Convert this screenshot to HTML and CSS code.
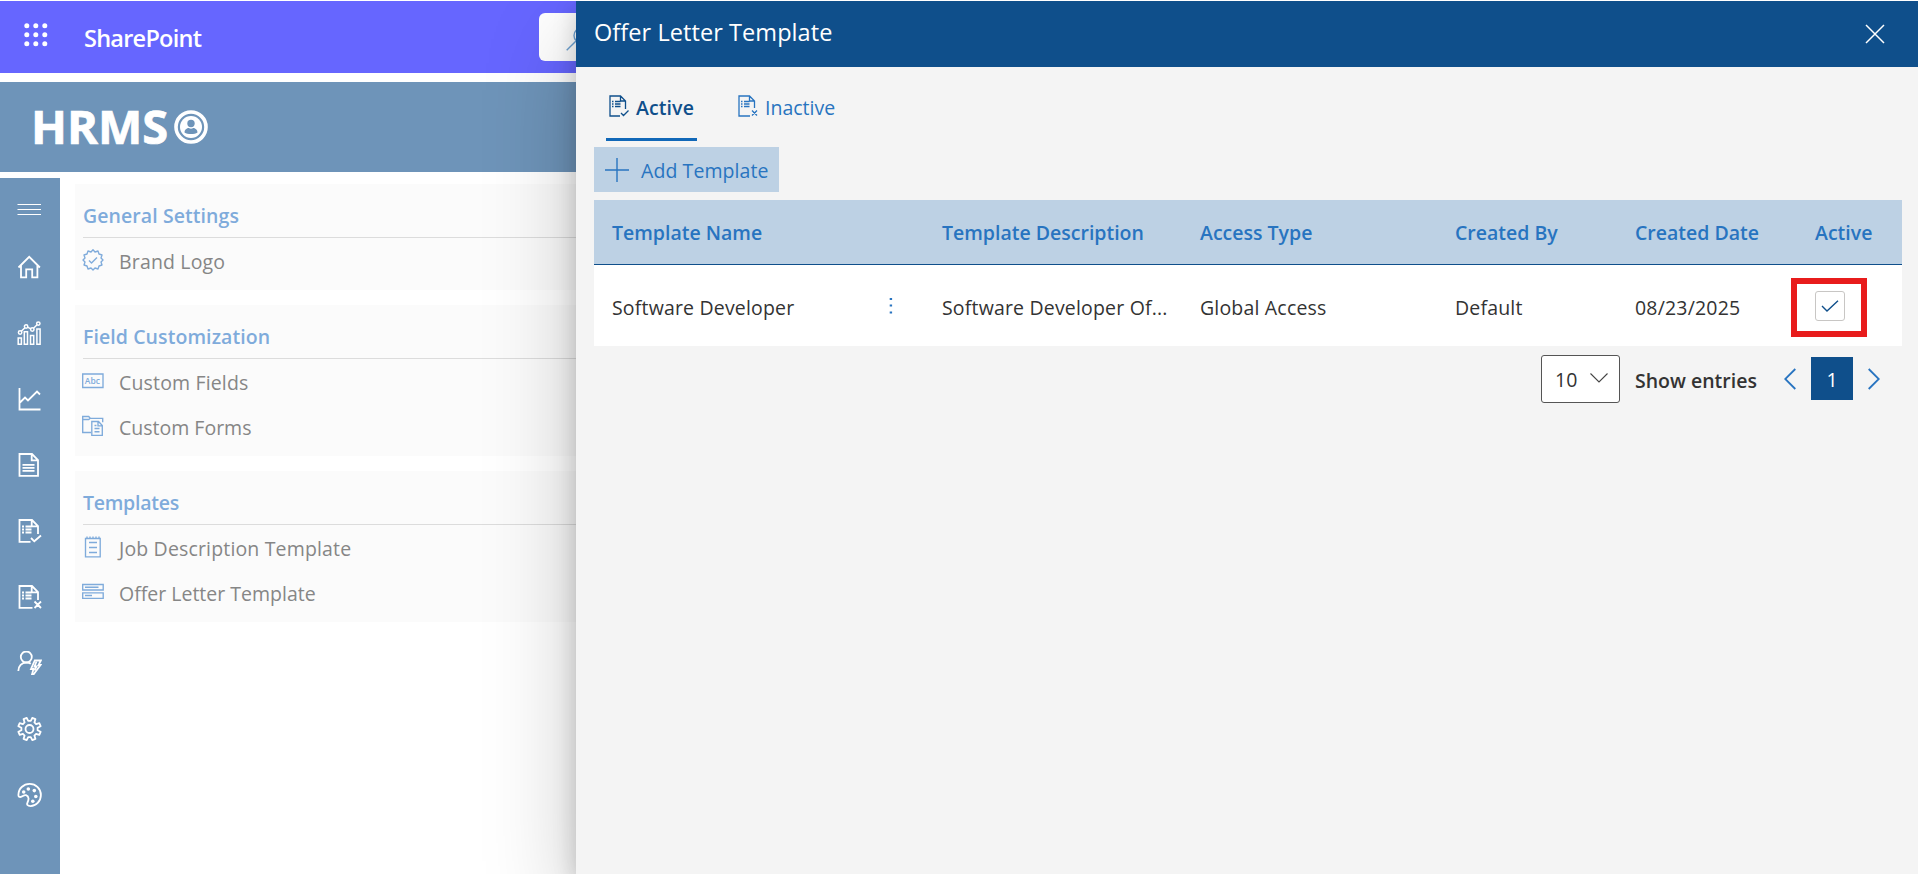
FILE: index.html
```html
<!DOCTYPE html>
<html lang="en">
<head>
<meta charset="utf-8">
<title>Offer Letter Template</title>
<link rel="stylesheet" href="styles.css">
</head>
<body>
<div class="page">
  <header class="suite-bar">
    <svg class="waffle" viewBox="0 0 24 24"><g fill="#fff"><circle cx="2.8" cy="2.8" r="2.5"/><circle cx="11.8" cy="2.8" r="2.5"/><circle cx="20.8" cy="2.8" r="2.5"/><circle cx="2.8" cy="11.8" r="2.5"/><circle cx="11.8" cy="11.8" r="2.5"/><circle cx="20.8" cy="11.8" r="2.5"/><circle cx="2.8" cy="20.8" r="2.5"/><circle cx="11.8" cy="20.8" r="2.5"/><circle cx="20.8" cy="20.8" r="2.5"/></g></svg>
    <span class="suite-name">SharePoint</span>
    <div class="search"><svg viewBox="0 0 24 24" width="24" height="24"><circle cx="15.5" cy="8.500" r="7.5"/><path d="M10 14L.7 23.300"/></svg></div>
  </header>
  <div class="brand-bar">
    <span class="brand-name">HRMS</span>
    <svg class="brand-icon" viewBox="0 0 34 34"><circle cx="17" cy="17" r="15" fill="none" stroke="#fff" stroke-width="3.600"/><circle cx="17" cy="17" r="11" fill="#fff"/><circle cx="17" cy="13.500" r="3.700" fill="#6e94b9"/><path d="M10.500 22.500c0-3 2.500-4.500 4.300-4.500 1.400.9 3 .9 4.400 0 1.800 0 4.300 1.500 4.300 4.500-3 2-10 2-13 0z" fill="#6e94b9"/></svg>
  </div>
  <div class="main">
    <nav class="rail">
      <svg class="thin" viewBox="0 0 24 24"><path d="M0 6.500h23.500M0 11.500h23.500M0 16.500h23.500"/></svg>
      <svg viewBox="0 0 24 24"><path d="M1 12.500L11.700 1.800 22.400 12.500M3.500 10.500v11.800h5.200v-8h6v8h5.200V10.500"/></svg>
      <svg viewBox="0 0 24 24"><g stroke-width="1.500"><path d="M.7 17h3.200v6.300H.7zM6.800 10.700H10v12.600H6.800zM13 14.500h3.200v8.800H13zM19.400 8h3.200v15.300h-3.200z"/><circle cx="2.600" cy="11.500" r="1.700"/><circle cx="8.600" cy="5.500" r="1.700"/><circle cx="14.800" cy="8.500" r="1.700"/><circle cx="20.800" cy="2.600" r="1.700"/><path d="M3.800 10.300l3.600-3.600M10.100 6.200l3.200 1.600M16 7.300l3.600-3.500"/></g></svg>
      <svg viewBox="0 0 24 24"><path d="M2 1v21.500h21M2.500 15.500l5-5 3 3 9-9 3 3"/></svg>
      <svg viewBox="0 0 24 24"><path d="M2 1h12.500l6 6v15.800H2zM14.200 1.300v6h6M5 11.800h12M5 14.800h12M5 17.800h12"/></svg>
      <svg viewBox="0 0 24 24"><path d="M13 22.800H2V1h12.500l6 6v8M14.200 1.300v6h6M4.500 7.500h2M8 7.500h6M4.500 10.500h2M8 10.500h6M4.500 13.500h2M8 13.500h6M13.500 19l3.300 3.300L23.500 16.500"/></svg>
      <svg viewBox="0 0 24 24"><path d="M15 22.800H2V1h12.500l6 6v8M14.200 1.300v6h6M4.500 7.500h2M8 7.500h6M4.500 10.500h2M8 10.500h6M4.500 13.500h2M8 13.500h6M17 16.500l6.500 6.500M23.500 16.500L17 23"/></svg>
      <svg viewBox="0 0 24 24"><circle cx="8.800" cy="6" r="5.500"/><path d="M.8 20c0-5 3.500-8.500 8-8.500 2 0 3.500.5 4.500 1.200M17.300 9.500h6l-2.300 4.500h2l-7 9.500h-1.500l1.500-5.500h-2.500z"/><path d="M19 10.500l-2 5h2l-2 4"/></svg>
      <svg viewBox="0 0 24 24"><g stroke-linejoin="round"><circle cx="12" cy="12" r="4"/><path d="M9.200.9l1.500 3h2.600l1.500-3 3.100 1.300-1 3.200 1.700 1.700 3.200-1 1.300 3.100-3 1.500v2.600l3 1.500-1.300 3.100-3.200-1-1.700 1.700 1 3.200-3.100 1.300-1.500-3h-2.600l-1.500 3-3.100-1.300 1-3.200-1.700-1.700-3.200 1L.9 14.800l3-1.500v-2.600l-3-1.500 1.300-3.100 3.200 1 1.700-1.700-1-3.200z"/></g></svg>
      <svg viewBox="0 0 24 24"><path d="M.9 12C.9 5.500 6 .9 12.200.9S23.400 5.800 23.400 12c0 6.300-5 11.100-10.400 11.100-3 0-4-1.600-3-3.600 1.200-2.600 2-6-1.500-7.300-2.300-.6-3.500 1.800-5.500 1.800C1.500 14 .9 13.500.9 12z"/><g fill="#fff" stroke="none"><circle cx="6.200" cy="9" r="1.800"/><circle cx="10.800" cy="6" r="1.800"/><circle cx="16.800" cy="7.600" r="1.800"/><circle cx="18.300" cy="13.500" r="1.800"/><circle cx="15.300" cy="18.200" r="1.800"/></g></svg>
    </nav>
    <div class="cards">
      <section class="card">
        <h2 class="card-title">General Settings</h2>
        <div class="item"><svg viewBox="0 0 22 22"><path stroke-linejoin="round" d="M11 .8l2 2.200 3-1 1 3 3 1-1 3 2 2-2 2 1 3-3 1-1 3-3-1-2 2-2-2-3 1-1-3-3-1 1-3-2-2 2-2-1-3 3-1 1-3 3 1zM7 11.500l2.500 2.500L15 8.500"/></svg><span>Brand Logo</span></div>
      </section>
      <section class="card">
        <h2 class="card-title">Field Customization</h2>
        <div class="item"><svg viewBox="0 0 22 22"><path d="M.7 4h20.300v13.500H.7z"/><text x="2.800" y="14">Abc</text></svg><span>Custom Fields</span></div>
        <div class="item"><svg viewBox="0 0 22 22"><path d="M9 17.500H.7V1.500h6l1.500 1.800h12.500v4M.7 4.500h6l1.500-1.200M9.800 6.500h6.700l3.800 4v9.800H9.800zM16 6.800v4h4M12.500 10.500h2M12.500 13.500h5M12.500 16.700h5"/></svg><span class="snug">Custom Forms</span></div>
      </section>
      <section class="card">
        <h2 class="card-title tight">Templates</h2>
        <div class="item"><svg viewBox="0 0 22 22"><path d="M3.500 2.500h14.700v18.300H3.500zM5 .5v2M8 .5v2M11 .5v2M14 .5v2M17 .5v2M7 6.500h8M7 11.500h8M7 16.500h8"/></svg><span>Job Description Template</span></div>
        <div class="item"><svg viewBox="0 0 22 22"><path d="M.7 3.500h20.500v5.500H.7zM.7 11.800h20.500v5.500H.7zM3 6.200h13.500M3 14.500h7"/></svg><span class="snug">Offer Letter Template</span></div>
      </section>
    </div>
  </div>
</div>

<aside class="panel">
  <header class="panel-head">
    <h1 class="panel-title">Offer Letter Template</h1>
    <svg class="close" viewBox="0 0 20 20"><path d="M1 1l18 18M19 1L1 19"/></svg>
  </header>
  <div class="panel-body">
    <div class="tabs">
      <div class="tab tab-on"><svg viewBox="0 0 20 22"><path d="M11 21H1V1h10.500l5 5v8M11.500 1v5h5M3 6.500h1.500M6 6.500h5.500M3 9h1.500M6 9h5.500M3 11.500h1.500M6 11.500h5.500M12 18l2.500 2.500L19.500 15.500"/></svg><span>Active</span></div>
      <div class="tab"><svg viewBox="0 0 20 22"><path d="M12 21H1V1h10.500l5 5v7M11.500 1v5h5M3 6.500h1.500M6 6.500h5.500M3 9h1.500M6 9h5.500M3 11.500h1.500M6 11.500h5.500M14 15.500l5 5M19 15.500l-5 5"/></svg><span>Inactive</span></div>
    </div>
    <div class="add"><svg viewBox="0 0 24 24"><path d="M12 0v24M0 12h24"/></svg><span>Add Template</span></div>
    <div class="table">
      <div class="row head"><span>Template Name</span><span>Template Description</span><span>Access Type</span><span>Created By</span><span>Created Date</span><span>Active</span></div>
      <div class="row data">
        <span class="name-cell"><span>Software Developer</span><svg viewBox="0 0 4 18"><path d="M.7 1h2.400v2H.7zM.7 7.500h2.400v2H.7zM.7 14.500h2.400v2H.7z"/></svg></span>
        <span>Software Developer Of...</span><span>Global Access</span><span>Default</span><span>08/23/2025</span>
        <span class="check-cell"><span class="check"><svg viewBox="0 0 18 12"><path d="M1 6l5 5L17 .8"/></svg></span><span class="mark"></span></span>
      </div>
    </div>
    <div class="pager">
      <div class="select"><span>10</span><svg viewBox="0 0 18 10"><path d="M.5.500L9 9 17.500.5"/></svg></div>
      <span class="show">Show entries</span>
      <svg class="arrow prev" viewBox="0 0 12 22"><path d="M11.300 1L1.200 11l10.100 10"/></svg>
      <span class="current">1</span>
      <svg class="arrow" viewBox="0 0 12 22"><path d="M.7 1l10.100 10L.7 21"/></svg>
    </div>
  </div>
</aside>
</body>
</html>
```
FILE: styles.css
```css
* { box-sizing: border-box; }
body { margin: 0; width: 1918px; height: 874px; overflow: hidden; background: #fff; font: 19.5px/27px "Open Sans", "Noto Sans", sans-serif; color: #333; }
svg { display: block; flex: none; fill: none; }
h1, h2 { margin: 0; }
.page { display: flex; flex-direction: column; height: 874px; padding-top: 1px; }
.suite-bar { height: 72px; flex: none; background: #66f; display: flex; align-items: center; padding-left: 24px; }
.waffle { width: 24px; height: 24px; margin-top: -5px; }
.suite-name { margin: 3px 0 0 36px; font-size: 23.5px; font-weight: 600; letter-spacing: -.75px; color: #fff; }
.search { position: absolute; left: 539px; top: 13px; width: 600px; height: 48px; border-radius: 6px; background: #fff; padding: 14px 0 0 27px; }
.search svg { stroke: #6ea3d4; stroke-width: 1.4; }
.brand-bar { height: 90px; flex: none; margin-top: 9px; background: #6e94b9; display: flex; align-items: center; padding-left: 31px; }
.brand-name { font: 800 47px/60px "Open Sans", sans-serif; font-weight: 700; -webkit-text-stroke: .7px #fff; color: #fff; margin-top: -2px; }
.brand-icon { width: 34px; height: 34px; margin-left: 6px; }
.main { flex: 1; display: flex; margin-top: 6px; }
.rail { width: 60px; background: #6e94b9; padding: 20px 0 0 17px; display: flex; flex-direction: column; gap: 42px; }
.rail svg { width: 25px; height: 24px; stroke: #fff; stroke-width: 1.8; }
.rail .thin { stroke-width: 1.1; margin-bottom: -9px; }
.cards { flex: 1; padding: 6px 0 0 15px; display: flex; flex-direction: column; gap: 15px; }
.card { background: #fbfbfb; padding: 0 0 7px 8px; }
.card-title { height: 54px; padding-top: 22px; border-bottom: 1px solid #dcdcdc; font-size: 19.5px; line-height: 20px; font-weight: 600; letter-spacing: .08px; color: #7fabdb; }
.card-title.tight { letter-spacing: -.25px; }
.item { height: 45px; display: flex; align-items: center; gap: 14px; color: #868686; padding-top: 1px; letter-spacing: .16px; }
.item .snug { letter-spacing: 0; }
.item svg { width: 22px; height: 22px; margin: -2px 0 0 -1px; stroke: #7fabdb; stroke-width: 1.35; }
.item svg + span { margin-left: 1px; }
.item text { font: 600 8.5px "Open Sans", sans-serif; letter-spacing: 0; fill: #7fabdb; stroke: none; }
.panel { position: absolute; left: 576px; top: 1px; width: 1342px; height: 873px; background: #f4f4f4; box-shadow: 0 38.4px 86.4px rgba(0,0,0,.22), 0 7.2px 21.6px rgba(0,0,0,.18); clip-path: inset(0 0 0 -200px); }
.panel-head { height: 66px; background: #0f4f8b; display: flex; align-items: center; justify-content: space-between; padding: 0 33px 0 18px; }
.panel-title { font-size: 23.5px; font-weight: 400; letter-spacing: .07px; color: #fff; line-height: 32px; margin-top: -5px; }
.close { width: 20px; height: 20px; stroke: #fff; stroke-width: 1.5; }
.panel-body { padding: 13px 16px 0 18px; }
.tabs { display: flex; gap: 38px; padding-left: 12px; height: 61px; }
.tab { display: flex; align-items: center; padding: 0 3px 3px; height: 61px; border-bottom: 3px solid transparent; color: #2874c0; }
.tab svg { width: 20px; height: 22px; margin: -4px 7px 0 0; stroke: currentColor; stroke-width: 1.3; }
.tab-on { width: 91px; color: #0f4f8b; font-weight: 600; letter-spacing: .1px; border-bottom-color: #1168b8; }
.add { margin-top: 6px; width: 185px; height: 45px; background: #bdd1e4; color: #2874c0; display: flex; align-items: center; gap: 12px; padding: 1px 0 0 11px; letter-spacing: .08px; }
.add svg { width: 24px; height: 24px; stroke: #2874c0; stroke-width: 1.4; }
.table { margin-top: 8px; background: #fff; }
.row { display: grid; grid-template-columns: 330px 258px 255px 180px 180px 87px; padding-left: 18px; align-items: center; white-space: nowrap; }
.head { height: 65px; background: #bdd1e4; border-bottom: 1px solid #0f4f8b; color: #2874c0; font-weight: 600; }
.data { height: 81px; padding-top: 3px; color: #333; letter-spacing: .18px; }
.name-cell { display: flex; align-items: center; justify-content: space-between; padding-right: 49px; }
.name-cell svg { width: 4px; height: 18px; fill: #2874c0; margin-top: -2px; }
.check-cell { position: relative; }
.check { display: flex; align-items: center; justify-content: center; width: 30px; height: 30px; border: 1px solid #c8c6c4; border-radius: 3px; margin-top: -2px; }
.check svg { width: 18px; height: 12px; stroke: #0f4f8b; stroke-width: 1.4; }
.mark { position: absolute; left: -24px; top: -15px; width: 76px; height: 59px; border: 6px solid #e81c1c; }
.pager { display: flex; align-items: center; height: 48px; margin-top: 9px; padding-left: 947px; }
.select { width: 79px; height: 48px; border: 1px solid #555; border-radius: 3px; background: #fff; display: flex; align-items: center; gap: 13px; padding-left: 13px; }
.select svg { width: 18px; height: 10px; stroke: #444; stroke-width: 1.1; margin-top: -3px; }
.show { margin: 3px 0 0 15px; width: 122px; font-weight: 600; }
.arrow { width: 12px; height: 22px; stroke: #2874c0; stroke-width: 1.8; }
.prev { margin-left: 27px; margin-right: 15px; }
.current { width: 42px; height: 43px; background: #0f4f8b; color: #fff; text-align: center; line-height: 45px; margin: -2px 15px 0 0; }
```
